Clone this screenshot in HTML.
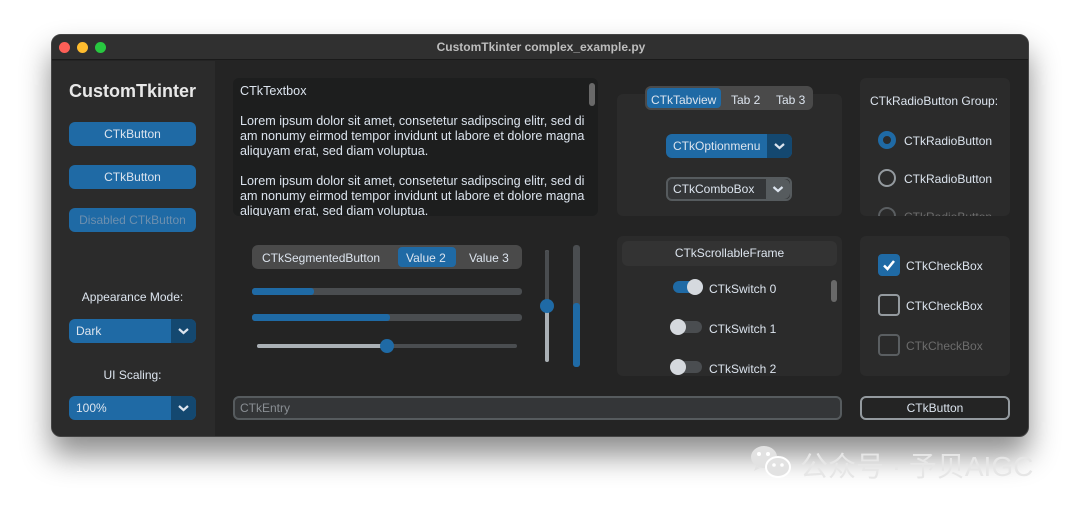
<!DOCTYPE html><html><head><style>
*{margin:0;padding:0;box-sizing:border-box}
body{width:1080px;height:506px;background:#fff;position:relative;overflow:hidden;font-family:"Liberation Sans",sans-serif;color:#dce4ee}
.a{position:absolute}
.win{left:51px;top:34px;width:978px;height:403px;background:#242424;border-radius:10px;box-shadow:0 18px 30px rgba(0,0,0,.45);overflow:hidden;border:1px solid #444}
.fr{background:#2b2b2b;border-radius:6px}
.btn{background:#1f6aa5;border-radius:6px;font-size:12px;text-align:center;line-height:24px;color:#dce4ee}
.t{font-size:12px;white-space:nowrap}
.om{background:#1f6aa5;border-radius:6px;font-size:12px;line-height:24px;padding-left:7px}
.om .ar{position:absolute;right:0;top:0;width:25px;height:24px;background:#144870;border-radius:0 6px 6px 0}
.bar{background:#4a4d50;border-radius:3px}
.chk{border:2px solid #949a9f;border-radius:4px;width:22px;height:22px}
.rad{width:18px;height:18px;border-radius:50%;border:2px solid #949a9f}
</style></head><body>
<div class="a win">
 <div class="a" style="left:0;top:0;width:978px;height:25px;background:#303030;border-bottom:1px solid #1a1a1a"></div>
 <div class="a" style="left:7px;top:7px;width:11px;height:11px;border-radius:50%;background:#fe5f57"></div>
 <div class="a" style="left:25px;top:7px;width:11px;height:11px;border-radius:50%;background:#febc2e"></div>
 <div class="a" style="left:43px;top:7px;width:11px;height:11px;border-radius:50%;background:#28c840"></div>
 <div class="a t" style="left:0;width:978px;top:5px;text-align:center;font-weight:bold;color:#bdbdbd">CustomTkinter complex_example.py</div>
 <div class="a" style="left:0;top:26px;width:163px;height:377px;background:#2b2b2b"></div>
</div>
<div class="a" style="left:69px;top:81px;font-size:18px;font-weight:bold;color:#e8e8e8">CustomTkinter</div>
<div class="a btn" style="left:69px;top:122px;width:127px">CTkButton</div>
<div class="a btn" style="left:69px;top:165px;width:127px">CTkButton</div>
<div class="a btn" style="left:69px;top:208px;width:127px;color:#6d8fae">Disabled CTkButton</div>
<div class="a t" style="left:69px;width:127px;text-align:center;top:290px">Appearance Mode:</div>
<div class="a om" style="left:69px;top:319px;width:127px">Dark<div class="ar"><svg width="25" height="24"><path d="M8 10l4.5 4 4.5-4" stroke="#dce4ee" stroke-width="2.2" fill="none"/></svg></div></div>
<div class="a t" style="left:69px;width:127px;text-align:center;top:368px">UI Scaling:</div>
<div class="a om" style="left:69px;top:396px;width:127px">100%<div class="ar"><svg width="25" height="24"><path d="M8 10l4.5 4 4.5-4" stroke="#dce4ee" stroke-width="2.2" fill="none"/></svg></div></div>

<div class="a" style="left:233px;top:78px;width:365px;height:138px;background:#1d1e1e;border-radius:6px;overflow:hidden">
 <div class="a" style="left:356px;top:5px;width:6px;height:23px;background:#696969;border-radius:3px"></div>
 <div class="a" style="left:7px;top:6px;font-size:12.6px;line-height:15px;width:346px;color:#dce4ee;word-break:break-all">CTkTextbox<br><br>Lorem ipsum dolor sit amet, consetetur sadipscing elitr, sed diam nonumy eirmod tempor invidunt ut labore et dolore magna aliquyam erat, sed diam voluptua.<br><br>Lorem ipsum dolor sit amet, consetetur sadipscing elitr, sed diam nonumy eirmod tempor invidunt ut labore et dolore magna aliquyam erat, sed diam voluptua.</div>
</div>

<div class="a fr" style="left:617px;top:94px;width:225px;height:122px"></div>
<div class="a" style="left:645px;top:86px;width:168px;height:24px;background:#4a4a4a;border-radius:6px"></div>
<div class="a" style="left:647px;top:88px;width:74px;height:20px;background:#1f6aa5;border-radius:4px"></div>
<div class="a t" style="left:651px;top:93px">CTkTabview</div>
<div class="a t" style="left:731px;top:93px">Tab 2</div>
<div class="a t" style="left:776px;top:93px">Tab 3</div>
<div class="a om" style="left:666px;top:134px;width:126px">CTkOptionmenu<div class="ar"><svg width="25" height="24"><path d="M8 10l4.5 4 4.5-4" stroke="#dce4ee" stroke-width="2.2" fill="none"/></svg></div></div>
<div class="a om" style="left:666px;top:177px;width:126px;background:#343638;border:2px solid #565b5e;line-height:20px;padding-left:5px">CTkComboBox<div class="ar" style="background:#565b5e;height:20px;width:24px"><svg width="24" height="20"><path d="M7.5 8l4.5 4 4.5-4" stroke="#dce4ee" stroke-width="2.2" fill="none"/></svg></div></div>

<div class="a fr" style="left:860px;top:78px;width:150px;height:138px;overflow:hidden">
 <div class="a t" style="left:10px;top:16px">CTkRadioButton Group:</div>
 <div class="a rad" style="left:18px;top:53px;border:5px solid #1f6aa5"></div>
 <div class="a t" style="left:44px;top:56px">CTkRadioButton</div>
 <div class="a rad" style="left:18px;top:91px"></div>
 <div class="a t" style="left:44px;top:94px">CTkRadioButton</div>
 <div class="a rad" style="left:18px;top:129px;border-color:#5a5e61"></div>
 <div class="a t" style="left:44px;top:132px;color:#6c6c6c">CTkRadioButton</div>
</div>

<div class="a" style="left:252px;top:245px;width:270px;height:24px;background:#4a4a4a;border-radius:6px"></div>
<div class="a" style="left:398px;top:247px;width:58px;height:20px;background:#1f6aa5;border-radius:4px"></div>
<div class="a t" style="left:262px;top:251px">CTkSegmentedButton</div>
<div class="a t" style="left:406px;top:251px">Value 2</div>
<div class="a t" style="left:469px;top:251px">Value 3</div>
<div class="a bar" style="left:252px;top:288px;width:270px;height:7px"><div style="width:62px;height:7px;background:#1f6aa5;border-radius:3px"></div></div>
<div class="a bar" style="left:252px;top:314px;width:270px;height:7px"><div style="width:138px;height:7px;background:#1f6aa5;border-radius:3px"></div></div>
<div class="a bar" style="left:257px;top:344px;width:260px;height:4px"><div style="width:130px;height:4px;background:#aab0b5;border-radius:2px"></div></div>
<div class="a" style="left:380px;top:339px;width:14px;height:14px;border-radius:50%;background:#1f6aa5"></div>
<div class="a" style="left:545px;top:250px;width:4px;height:112px;background:#aab0b5;border-radius:2px"><div style="height:56px;background:#4a4d50;border-radius:2px"></div></div>
<div class="a" style="left:540px;top:299px;width:14px;height:14px;border-radius:50%;background:#1f6aa5"></div>
<div class="a bar" style="left:573px;top:245px;width:7px;height:122px"><div style="margin-top:58px;height:64px;background:#1f6aa5;border-radius:3px"></div></div>

<div class="a fr" style="left:617px;top:236px;width:225px;height:140px;overflow:hidden">
 <div class="a" style="left:5px;top:5px;width:215px;height:25px;background:#333;border-radius:6px;font-size:12px;text-align:center;line-height:25px">CTkScrollableFrame</div>
 <div class="a" style="left:214px;top:44px;width:6px;height:22px;background:#696969;border-radius:3px"></div>
 <div class="a" style="left:56px;top:45px;width:30px;height:12px;background:#1f6aa5;border-radius:6px"></div>
 <div class="a" style="left:70px;top:43px;width:16px;height:16px;background:#d5d9de;border-radius:50%"></div>
 <div class="a t" style="left:92px;top:46px">CTkSwitch 0</div>
 <div class="a" style="left:55px;top:85px;width:30px;height:12px;background:#4a4d50;border-radius:6px"></div>
 <div class="a" style="left:53px;top:83px;width:16px;height:16px;background:#d5d9de;border-radius:50%"></div>
 <div class="a t" style="left:92px;top:86px">CTkSwitch 1</div>
 <div class="a" style="left:55px;top:125px;width:30px;height:12px;background:#4a4d50;border-radius:6px"></div>
 <div class="a" style="left:53px;top:123px;width:16px;height:16px;background:#d5d9de;border-radius:50%"></div>
 <div class="a t" style="left:92px;top:126px">CTkSwitch 2</div>
</div>

<div class="a fr" style="left:860px;top:236px;width:150px;height:140px">
 <div class="a chk" style="left:18px;top:18px;background:#1f6aa5;border-color:#1f6aa5"><svg width="18" height="18"><path d="M4 9.5l3.5 3.5 6.5-8" stroke="#fff" stroke-width="2.5" fill="none"/></svg></div>
 <div class="a t" style="left:46px;top:23px">CTkCheckBox</div>
 <div class="a chk" style="left:18px;top:58px"></div>
 <div class="a t" style="left:46px;top:63px">CTkCheckBox</div>
 <div class="a chk" style="left:18px;top:98px;border-color:#5a5e61"></div>
 <div class="a t" style="left:46px;top:103px;color:#6c6c6c">CTkCheckBox</div>
</div>

<div class="a" style="left:233px;top:396px;width:609px;height:24px;background:#343638;border:2px solid #565b5e;border-radius:6px;font-size:12px;line-height:20px;padding-left:5px;color:#8a8f94">CTkEntry</div>
<div class="a" style="left:860px;top:396px;width:150px;height:24px;border:2px solid #949a9f;border-radius:6px;font-size:12px;line-height:20px;text-align:center">CTkButton</div>

<svg class="a" style="left:750px;top:444px" width="44" height="36" viewBox="0 0 44 36">
 <ellipse cx="14" cy="13" rx="13" ry="11" fill="#e2e2e2"/>
 <path d="M6 22l-2 5 6-3z" fill="#e2e2e2"/>
 <ellipse cx="28" cy="23" rx="12" ry="10" fill="#e2e2e2" stroke="#fff" stroke-width="2"/>
 <circle cx="9" cy="10" r="2" fill="#fff"/><circle cx="18" cy="10" r="2" fill="#fff"/>
 <circle cx="24" cy="21" r="1.8" fill="#fff"/><circle cx="32" cy="21" r="1.8" fill="#fff"/>
</svg>
<div class="a" style="left:800px;top:445px;font-size:28px;color:#e6e6e6;font-family:'Liberation Sans','Noto Sans CJK SC',sans-serif;white-space:nowrap">公众号 · 予贝AIGC</div>
</body></html>
